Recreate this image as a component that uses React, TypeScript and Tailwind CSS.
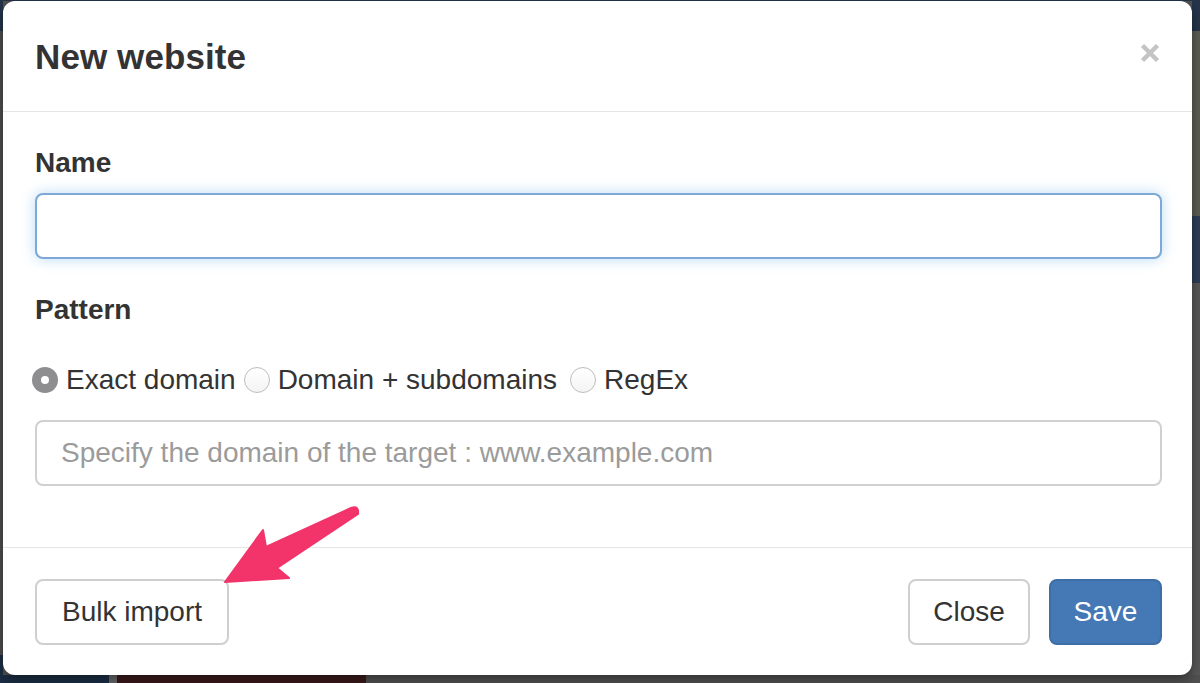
import React from 'react'

const font = { fontFamily: '"Liberation Sans", Arial, sans-serif' }

function Radio({ checked, label, className = '' }: { checked?: boolean; label: string; className?: string }) {
  return (
    <label className={`flex items-center ${className}`}>
      {checked ? (
        <span className="w-[26px] h-[26px] rounded-full bg-[#8e8e91] flex items-center justify-center">
          <span className="w-[8px] h-[8px] rounded-full bg-white" />
        </span>
      ) : (
        <span className="w-[26px] h-[26px] rounded-full border border-[#bdbdbd] bg-gradient-to-b from-white to-[#f4f4f4]" />
      )}
      <span className="ml-[8px] text-[28px] leading-[40px] text-[#333]">{label}</span>
    </label>
  )
}

function Arrow() {
  return (
    <svg width="150" height="90" viewBox="0 0 150 90" className="absolute left-[215px] top-[500px]">
      <path
        d="M7,81 L45,29 L48,46 L133,7 Q141,4 140,13 L59,67 L71,77 Z"
        fill="#f2346b"
        stroke="#f2346b"
        strokeWidth="2"
        strokeLinejoin="round"
      />
    </svg>
  )
}

export default function App() {
  return (
    <div className="w-[1200px] h-[683px] bg-[#545454] flex flex-col overflow-hidden" style={font}>
      <div className="h-[1px] bg-[#24344a]" />
      <div className="flex h-[674px]">
        <div className="w-[3px] flex flex-col">
          <div className="h-[30px] bg-[#24344a]" />
          <div className="flex-1 bg-[#4e4e4e]" />
          <div className="h-[20px] bg-[#1c2e44]" />
        </div>

        <div className="relative w-[1189px] bg-white rounded-[12px] shadow-[0_4px_12px_rgba(0,0,0,0.4)] flex flex-col">
          {/* header */}
          <div className="h-[111px] pl-[32px] pr-[32px] flex items-center justify-between border-b border-[#e5e5e5]">
            <h4 className="text-[35px] font-bold text-[#333] leading-none tracking-[0.1px]">New website</h4>
            <svg width="20" height="20" viewBox="0 0 20 20" className="mt-[-6px]">
              <path d="M2.5 2.5 L17.5 17.5 M17.5 2.5 L2.5 17.5" stroke="#c4c4c4" strokeWidth="4.5" />
            </svg>
          </div>

          {/* body */}
          <div className="pl-[32px] pr-[30px] flex flex-col h-[435px]">
            <div className="mt-[31px] text-[28px] leading-[40px] font-bold text-[#333]">Name</div>
            <div className="mt-[10px] h-[66px] rounded-[8px] border-2 border-[#7ea8d6] shadow-[0_0_14px_rgba(102,175,233,0.45)] bg-white" />
            <div className="mt-[31px] text-[28px] leading-[40px] font-bold text-[#333]">Pattern</div>
            <div className="mt-[30px] flex items-center ml-[-3px]">
              <Radio checked label="Exact domain" />
              <Radio label="Domain + subdomains" className="ml-[8px]" />
              <Radio label="RegEx" className="ml-[13px]" />
            </div>
            <div className="mt-[20px] h-[66px] rounded-[8px] border-2 border-[#d0d0d0] flex items-center pl-[24px]">
              <span className="text-[28px] text-[#9b9b9b]">Specify the domain of the target : www.example.com</span>
            </div>
          </div>

          {/* footer */}
          <div className="flex-1 border-t border-[#e5e5e5] pl-[32px] pr-[30px] flex items-start pt-[31px]">
            <button className="h-[66px] px-[25px] rounded-[8px] border-2 border-[#cfcfcf] bg-white text-[28px] text-[#333]">
              Bulk import
            </button>
            <div className="flex-1" />
            <button className="h-[66px] w-[122px] rounded-[8px] border-2 border-[#cfcfcf] bg-white text-[28px] text-[#333]">
              Close
            </button>
            <button className="ml-[19px] h-[66px] w-[113px] rounded-[8px] border-2 border-[#3d6fa6] bg-[#4579b5] text-[28px] text-white">
              Save
            </button>
          </div>

          <Arrow />
        </div>

        <div className="w-[8px] flex flex-col">
          <div className="h-[30px] bg-[#24344a]" />
          <div className="h-[185px] bg-[#5b5d52]" />
          <div className="h-[67px] bg-[#2b3d55]" />
          <div className="flex-1 bg-[#575757]" />
        </div>
      </div>
      <div className="flex h-[8px]">
        <div className="w-[109px] bg-[#1b2d44]" />
        <div className="w-[8px] bg-[#666]" />
        <div className="w-[249px] bg-[#3a1a1b]" />
        <div className="flex-1 bg-[#505050]" />
      </div>
    </div>
  )
}
